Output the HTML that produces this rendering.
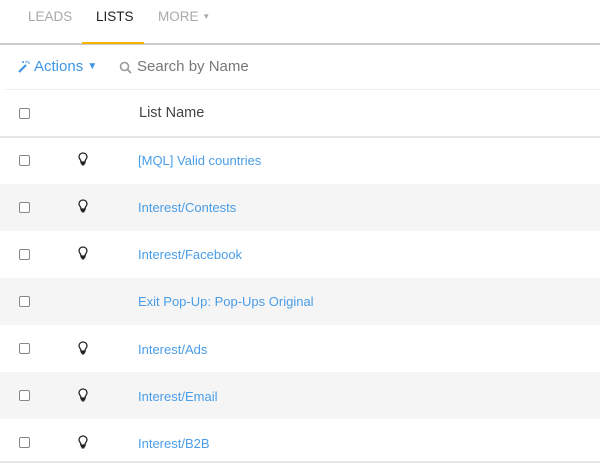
<!DOCTYPE html>
<html><head><style>
body{margin:0;width:600px;height:466px;overflow:hidden;background:#fff;font-family:"Liberation Sans",sans-serif;position:relative}
.a{position:absolute;white-space:nowrap}
.tab{font-size:13.5px;top:9px}
.cb{position:absolute;left:19px;width:9px;height:9px;border:1px solid #888;border-radius:2px;background:#fff}
.row{position:absolute;left:0;width:600px;height:47px}
.g{background:#f5f5f5}
.lnk{position:absolute;left:138px;font-size:13px;color:#4a9de8}
.bulb{position:absolute;left:78px}
</style></head><body>
<div class="a tab" style="left:28px;color:#aaa">LEADS</div>
<div class="a tab" style="left:96px;color:#222">LISTS</div>
<div class="a tab" style="left:158px;color:#aaa">MORE <span style="font-size:8px;vertical-align:2px">▼</span></div>
<div class="a" style="left:0;top:43px;width:600px;height:2px;background:#ccc"></div>
<div class="a" style="left:82px;top:42px;width:62px;height:2px;background:#f5b400"></div>
<svg class="a" style="left:17px;top:60px" width="14" height="14" viewBox="0 0 14 14"><path d="M2 12L9 5" stroke="#3d95e6" stroke-width="2.2"/><path d="M9 1v2M11 3h2M10.5 0.8l1 1M5 2h2M6 1v2" stroke="#3d95e6" stroke-width="1"/></svg>
<div class="a" style="left:34px;top:58px;font-size:15px;color:#3d95e6">Actions <span style="font-size:10px;vertical-align:2px">▼</span></div>
<svg class="a" style="left:119px;top:61px" width="13" height="13" viewBox="0 0 13 13"><circle cx="5.5" cy="5.5" r="4" fill="none" stroke="#999" stroke-width="1.6"/><path d="M8.5 8.5L12 12" stroke="#999" stroke-width="1.8"/></svg>
<div class="a" style="left:137px;top:58px;font-size:15px;color:#777">Search by Name</div>
<div class="a" style="left:5px;top:89px;width:595px;height:1px;background:#eee"></div>
<div class="cb" style="top:108px"></div>
<div class="a" style="left:139px;top:105px;font-size:14.5px;color:#444">List Name</div>
<div class="a" style="left:0;top:136px;width:600px;height:2px;background:#e6e6e6"></div>

<div class="row" style="top:138px"></div>
<div class="row g" style="top:184px"></div>
<div class="row" style="top:231px"></div>
<div class="row g" style="top:278px"></div>
<div class="row" style="top:325px"></div>
<div class="row g" style="top:372px"></div>
<div class="a" style="left:0;top:461px;width:600px;height:2px;background:#e6e6e6"></div>

<div class="cb" style="top:155px"></div><div class="lnk" style="top:153px">[MQL] Valid countries</div>
<div class="cb" style="top:202px"></div><div class="lnk" style="top:200px">Interest/Contests</div>
<div class="cb" style="top:249px"></div><div class="lnk" style="top:247px">Interest/Facebook</div>
<div class="cb" style="top:296px"></div><div class="lnk" style="top:294px">Exit Pop-Up: Pop-Ups Original</div>
<div class="cb" style="top:343px"></div><div class="lnk" style="top:342px">Interest/Ads</div>
<div class="cb" style="top:390px"></div><div class="lnk" style="top:389px">Interest/Email</div>
<div class="cb" style="top:437px"></div><div class="lnk" style="top:436px">Interest/B2B</div>

<svg width="0" height="0" style="position:absolute"><defs><g id="b"><path d="M5 1C2.5 1 1 2.8 1 4.8c0 1.6 1.2 2.6 1.8 3.8V10h4.4V8.6C7.8 7.4 9 6.4 9 4.8 9 2.8 7.5 1 5 1z" fill="#fff" stroke="#222" stroke-width="1.3"/><rect x="2.8" y="10" width="4.4" height="2.4" fill="#222"/><rect x="3.8" y="12.2" width="2.4" height="1.3" fill="#222"/></g></defs></svg>
<svg class="bulb" style="top:152px" width="10" height="14"><use href="#b"/></svg>
<svg class="bulb" style="top:199px" width="10" height="14"><use href="#b"/></svg>
<svg class="bulb" style="top:246px" width="10" height="14"><use href="#b"/></svg>
<svg class="bulb" style="top:341px" width="10" height="14"><use href="#b"/></svg>
<svg class="bulb" style="top:388px" width="10" height="14"><use href="#b"/></svg>
<svg class="bulb" style="top:435px" width="10" height="14"><use href="#b"/></svg>
</body></html>
